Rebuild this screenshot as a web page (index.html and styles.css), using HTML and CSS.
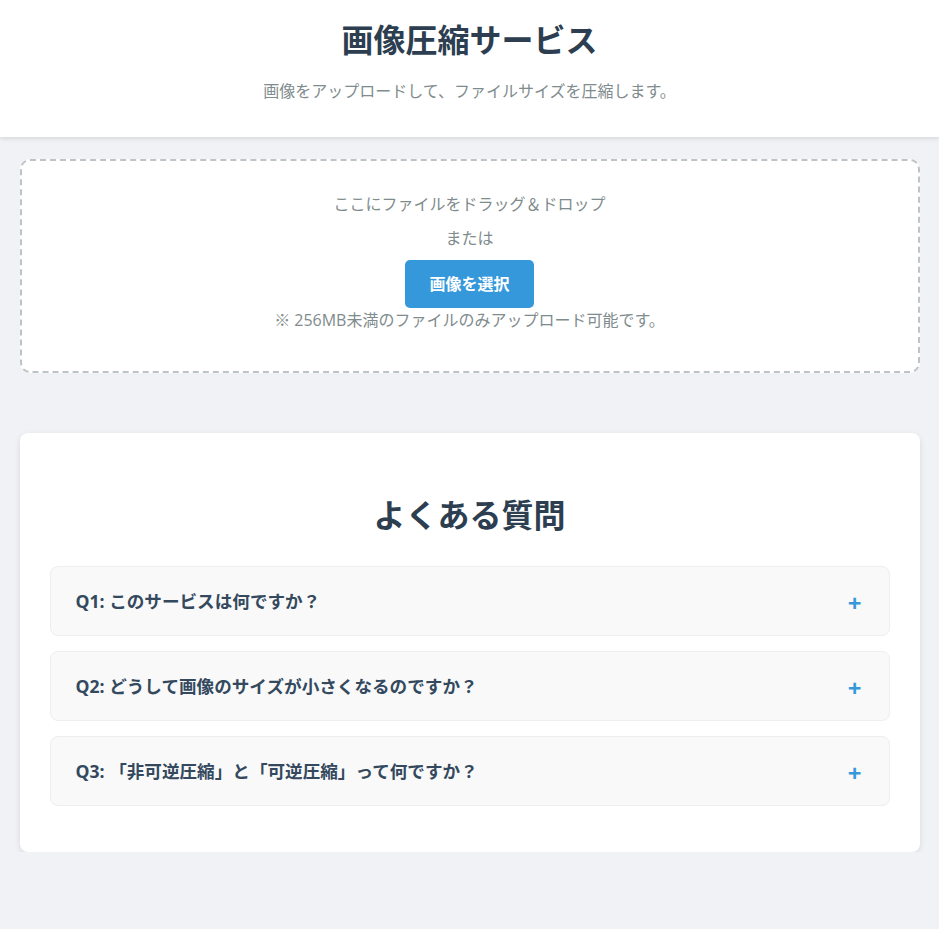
FILE: index.html
```html
<!DOCTYPE html>
<html lang="ja">
<head>
    <meta charset="UTF-8">
    <meta name="viewport" content="width=device-width, initial-scale=1.0">
    <title>画像圧縮サービス</title>
    <link rel="stylesheet" href="styles.css">
</head>
<body>
    <div class="header">
        <h1>画像圧縮サービス</h1>
        <p>画像をアップロードして、ファイルサイズを圧縮します。</p>
    </div>
    <div class="main-container">
        <div class="drop-zone">
            <p>ここにファイルをドラッグ＆ドロップ</p>
            <p>または</p>
            <button type="button" class="select-button">画像を選択</button>
            <p class="note">※ 256MB未満のファイルのみアップロード可能です。</p>
        </div>
        <div class="faq-container">
            <h2>よくある質問</h2>
            <div class="faq-item">
                <span>Q1: このサービスは何ですか？</span>
                <span class="toggle">+</span>
            </div>
            <div class="faq-item">
                <span>Q2: どうして画像のサイズが小さくなるのですか？</span>
                <span class="toggle">+</span>
            </div>
            <div class="faq-item">
                <span>Q3: 「非可逆圧縮」と「可逆圧縮」って何ですか？</span>
                <span class="toggle">+</span>
            </div>
        </div>
    </div>
</body>
</html>
```

FILE: styles.css
```css
body {
    font-family: "Open Sans", "Noto Sans CJK JP", sans-serif;
    background-color: #f0f2f5;
    margin: 0;
    padding: 0;
    color: #2c3e50;
    font-size: 16px;
    line-height: 24px;
}
.header {
    background-color: #fff;
    text-align: center;
    padding: 20px 20px 34px;
    box-shadow: 0 2px 4px rgba(0, 0, 0, 0.1);
}
.header h1 {
    margin: 0 0 19px;
    font-size: 32px;
    line-height: 40px;
    font-weight: 700;
    color: #2c3e50;
}
.header p {
    margin: 0;
    color: #7f8c8d;
}
.main-container {
    max-width: 900px;
    margin: 22px auto 0;
}
.drop-zone {
    background-color: #fff;
    border: 2px dashed #bdc3c7;
    border-radius: 10px;
    padding: 31px 20px 29px;
    text-align: center;
    color: #7f8c8d;
}
.drop-zone p {
    margin: 0 0 10px;
}
.drop-zone .note {
    margin: 0 0 10px;
}
.select-button {
    font-family: inherit;
    font-size: 16px;
    line-height: 24px;
    font-weight: 700;
    color: #fff;
    background-color: #3498db;
    border: none;
    border-radius: 5px;
    padding: 12px 24px;
    display: block;
    margin: 0 auto;
}
.faq-container {
    background-color: #fff;
    border-radius: 8px;
    box-shadow: 0 2px 6px rgba(0, 0, 0, 0.1);
    padding: 30px 30px 31px;
    margin-top: 60px;
}
.faq-container h2 {
    text-align: center;
    font-size: 32px;
    line-height: 48px;
    font-weight: 700;
    margin: 28px 0 27px;
    color: #2c3e50;
}
.faq-item {
    display: flex;
    justify-content: space-between;
    align-items: center;
    background-color: #f9f9f9;
    border: 1px solid #eee;
    border-radius: 8px;
    padding: 21px 25px;
    margin-bottom: 15px;
    font-size: 17.6px;
    line-height: 26px;
    font-weight: 700;
    color: #34495e;
}
.toggle {
    color: #3498db;
    font-size: 24px;
    font-weight: 700;
    line-height: 26px;
    position: relative;
    top: 2px;
    right: 2px;
}
```
